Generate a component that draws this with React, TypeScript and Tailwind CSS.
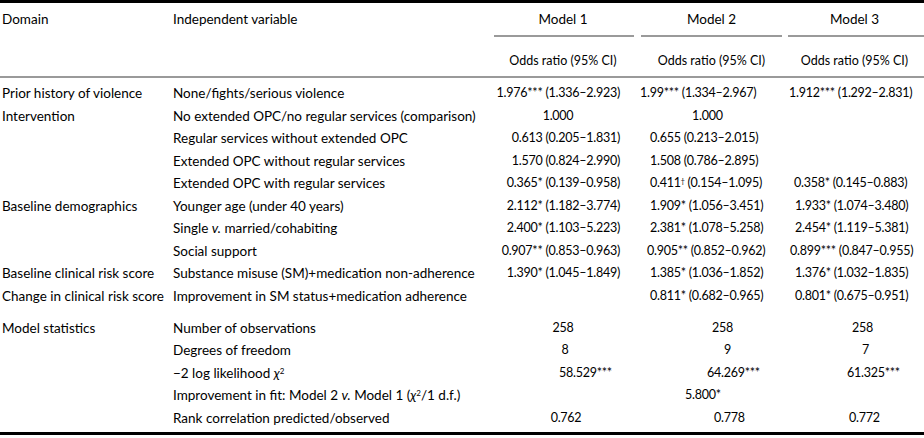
import React from "react";

type Cell = { t: React.ReactNode; c: string };

interface Row {
  domain?: string;
  variable: React.ReactNode;
  m1?: Cell;
  m2?: Cell;
  m3?: Cell;
}

const R = "text-right pr-[18px]";

const dataRows: Row[] = [
  {
    domain: "Prior history of violence",
    variable: "None/fights/serious violence",
    m1: { t: "1.976*** (1.336–2.923)", c: R },
    m2: { t: "1.99*** (1.334–2.967)", c: "pl-[2px]" },
    m3: { t: "1.912*** (1.292–2.831)", c: "pl-[4px]" },
  },
  {
    domain: "Intervention",
    variable: "No extended OPC/no regular services (comparison)",
    m1: { t: "1.000", c: "text-center pr-[10px]" },
    m2: { t: "1.000", c: "pl-[54px]" },
  },
  {
    variable: "Regular services without extended OPC",
    m1: { t: "0.613 (0.205–1.831)", c: R },
    m2: { t: "0.655 (0.213–2.015)", c: "pl-[12px]" },
  },
  {
    variable: "Extended OPC without regular services",
    m1: { t: "1.570 (0.824–2.990)", c: R },
    m2: { t: "1.508 (0.786–2.895)", c: "pl-[12px]" },
  },
  {
    variable: "Extended OPC with regular services",
    m1: { t: "0.365* (0.139–0.958)", c: R },
    m2: {
      t: (
        <>
          0.411<sup className="text-[7px]">†</sup> (0.154–1.095)
        </>
      ),
      c: "pl-[12px]",
    },
    m3: { t: "0.358* (0.145–0.883)", c: "pl-[9px]" },
  },
  {
    domain: "Baseline demographics",
    variable: "Younger age (under 40 years)",
    m1: { t: "2.112* (1.182–3.774)", c: R },
    m2: { t: "1.909* (1.056–3.451)", c: "pl-[12px]" },
    m3: { t: "1.933* (1.074–3.480)", c: "pl-[10px]" },
  },
  {
    variable: (
      <>
        Single <i>v.</i> married/cohabiting
      </>
    ),
    m1: { t: "2.400* (1.103–5.223)", c: R },
    m2: { t: "2.381* (1.078–5.258)", c: "pl-[12px]" },
    m3: { t: "2.454* (1.119–5.381)", c: "pl-[10px]" },
  },
  {
    variable: "Social support",
    m1: { t: "0.907** (0.853–0.963)", c: R },
    m2: { t: "0.905** (0.852–0.962)", c: "pl-[9px]" },
    m3: { t: "0.899*** (0.847–0.955)", c: "pl-[5px]" },
  },
  {
    domain: "Baseline clinical risk score",
    variable: "Substance misuse (SM)+medication non-adherence",
    m1: { t: "1.390* (1.045–1.849)", c: R },
    m2: { t: "1.385* (1.036–1.852)", c: "pl-[12px]" },
    m3: { t: "1.376* (1.032–1.835)", c: "pl-[10px]" },
  },
  {
    domain: "Change in clinical risk score",
    variable: "Improvement in SM status+medication adherence",
    m2: { t: "0.811* (0.682–0.965)", c: "pl-[12px]" },
    m3: { t: "0.801* (0.675–0.951)", c: "pl-[10px]" },
  },
];

const statRows: Row[] = [
  {
    domain: "Model statistics",
    variable: "Number of observations",
    m1: { t: "258", c: "text-center" },
    m2: { t: "258", c: "pl-[74px]" },
    m3: { t: "258", c: "pl-[67px]" },
  },
  {
    variable: "Degrees of freedom",
    m1: { t: "8", c: "text-center pl-[4px]" },
    m2: { t: "9", c: "pl-[86px]" },
    m3: { t: "7", c: "pl-[77px]" },
  },
  {
    variable: (
      <>
        −2 log likelihood <i>χ</i>
        <sup className="text-[8px]">2</sup>
      </>
    ),
    m1: { t: "58.529***", c: "pl-[71px]" },
    m2: { t: "64.269***", c: "pl-[69px]" },
    m3: { t: "61.325***", c: "pl-[62px]" },
  },
  {
    variable: (
      <>
        Improvement in fit: Model 2 <i>v.</i> Model 1 (<i>χ</i>
        <sup className="text-[8px]">2</sup>/1 d.f.)
      </>
    ),
    m2: { t: "5.800*", c: "pl-[47px]" },
  },
  {
    variable: "Rank correlation predicted/observed",
    m1: { t: "0.762", c: "text-center pl-[6px]" },
    m2: { t: "0.778", c: "pl-[76px]" },
    m3: { t: "0.772", c: "pl-[64px]" },
  },
];

const cols = "grid grid-cols-[173px_315px_150px_147px_139px]";
const num = "whitespace-nowrap text-[12.5px] tracking-[-0.25px]";

function TableRow({ row }: { row: Row }) {
  return (
    <div className={`${cols} h-[22.5px] items-center`}>
      <div className="pl-[2px] whitespace-nowrap">{row.domain}</div>
      <div className="whitespace-nowrap">{row.variable}</div>
      <div className={`${num} ${row.m1?.c ?? ""}`}>{row.m1?.t}</div>
      <div className={`${num} ${row.m2?.c ?? ""}`}>{row.m2?.t}</div>
      <div className={`${num} ${row.m3?.c ?? ""}`}>{row.m3?.t}</div>
    </div>
  );
}

export default function App() {
  return (
    <div className="w-[924px] h-[438px] bg-white text-black font-['Lato',sans-serif] text-[13.5px] leading-[22.5px] overflow-hidden">
      <div className="border-t-[3px] border-black">
        {/* header */}
        <div className={cols}>
          <div className="h-[32px] flex items-center pl-[2px]">Domain</div>
          <div className="h-[32px] flex items-center">Independent variable</div>
          <div className="h-[34px] flex flex-col">
            <div className="h-[32px] flex items-center justify-center">Model 1</div>
            <div className="h-[2px] bg-[#9a9a9a] ml-[6px] mr-[4px]" />
          </div>
          <div className="h-[34px] flex flex-col">
            <div className="h-[32px] flex items-center justify-center">Model 2</div>
            <div className="h-[2px] bg-[#9a9a9a] ml-[3px] mr-[3px]" />
          </div>
          <div className="h-[34px] flex flex-col">
            <div className="h-[32px] flex items-center justify-center">Model 3</div>
            <div className="h-[2px] bg-[#9a9a9a] ml-[3px]" />
          </div>
        </div>
        <div className={`${cols} pt-[13px] pb-[3.5px] border-b-2 border-[#9a9a9a] text-[12.5px]`}>
          <div />
          <div />
          <div className="text-center">Odds ratio (95% CI)</div>
          <div className="text-center">Odds ratio (95% CI)</div>
          <div className="text-center">Odds ratio (95% CI)</div>
        </div>

        {/* body */}
        <div className="pt-[4px]">
          {dataRows.map((r, i) => (
            <TableRow key={i} row={r} />
          ))}
        </div>
        <div className="pt-[9.5px] pb-[3px] border-b-[3px] border-black">
          {statRows.map((r, i) => (
            <TableRow key={i} row={r} />
          ))}
        </div>
      </div>
    </div>
  );
}
